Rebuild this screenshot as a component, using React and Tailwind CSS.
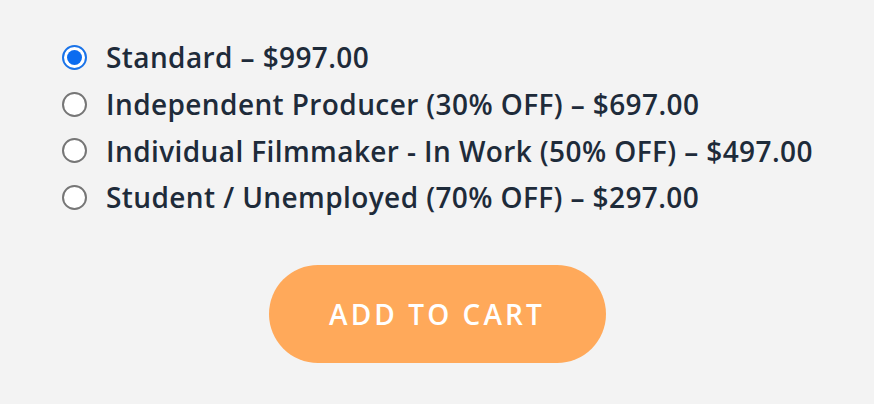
import { useState } from 'react';

const options = [
  { id: 'standard', label: 'Standard – $997.00' },
  { id: 'producer', label: 'Independent Producer (30% OFF) – $697.00' },
  { id: 'filmmaker', label: 'Individual Filmmaker - In Work (50% OFF) – $497.00' },
  { id: 'student', label: 'Student / Unemployed (70% OFF) – $297.00' },
];

const App = () => {
  const [selected, setSelected] = useState('standard');

  return (
    <div className="w-[874px] h-[404px] bg-[#f3f3f3] font-['Open_Sans',sans-serif] overflow-hidden">
      <div className="flex flex-col pl-[62px] pt-[34px]">
        {options.map((opt) => {
          const active = selected === opt.id;
          return (
            <label
              key={opt.id}
              onClick={() => setSelected(opt.id)}
              className="flex items-center h-[46.7px] cursor-pointer"
            >
              <span
                className={`w-[25px] h-[25px] shrink-0 rounded-full flex items-center justify-center bg-white border-2 ${
                  active ? 'border-[#1a73e8]' : 'border-[#767676]'
                }`}
              >
                {active && <span className="w-[15px] h-[15px] rounded-full bg-[#0b6cf0]"></span>}
              </span>
              <span className="ml-[19px] text-[28px] font-semibold tracking-[0.4px] text-[#1e2b3a] leading-none whitespace-nowrap">
                {opt.label}
              </span>
            </label>
          );
        })}
      </div>

      <div className="flex justify-center mt-[44px]">
        <button className="w-[337px] h-[98px] rounded-full bg-[#ffa95a] text-white text-[28px] font-semibold tracking-[0.11em]">
          ADD TO CART
        </button>
      </div>
    </div>
  );
};

export default App;
